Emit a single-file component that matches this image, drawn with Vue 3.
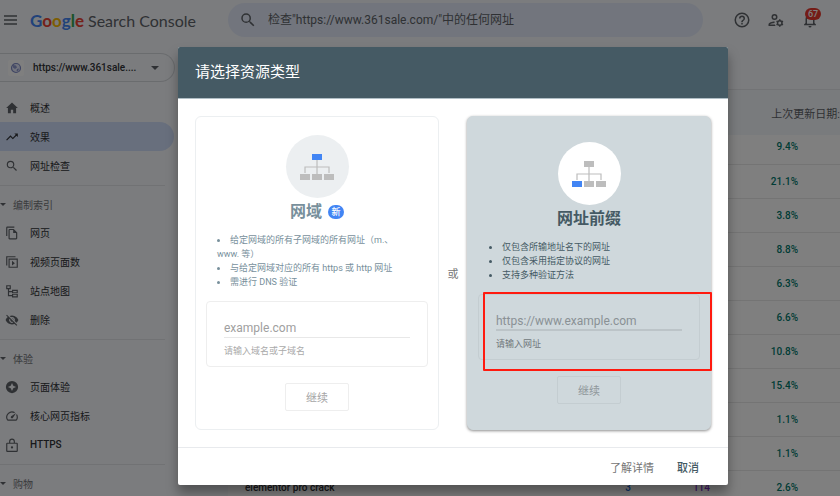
<template>
  <div class="page">
    <header class="topbar">
      <button class="icon-btn menu-btn" type="button" aria-label="菜单">
        <svg width="14" height="10" viewBox="0 0 14 10">
          <path d="M1 1h13M1 5h13M1 9h13" stroke="#5f6368" stroke-width="1.5" />
        </svg>
      </button>
      <a class="logo" href="#">
        <span class="google"
          ><span
            v-for="(letter, i) in logoLetters"
            :key="i"
            :class="letter.color"
            >{{ letter.char }}</span
          ></span
        >
        <span class="product">Search Console</span>
      </a>
      <label class="search">
        <svg width="18" height="18" viewBox="0 0 24 24">
          <path :d="icons.search" />
        </svg>
        <input
          type="text"
          aria-label="网址检查"
          placeholder='检查"https://www.361sale.com/"中的任何网址'
        />
      </label>
      <div class="actions">
        <button class="icon-btn" type="button" aria-label="帮助">
          <svg width="18" height="18" viewBox="0 0 24 24">
            <path :d="icons.help" />
          </svg>
        </button>
        <button class="icon-btn" type="button" aria-label="用户设置">
          <svg width="18" height="18" viewBox="0 0 24 24">
            <path
              d="M10 12a4 4 0 1 0 0-8 4 4 0 0 0 0 8zm0-6a2 2 0 1 1 0 4 2 2 0 0 1 0-4zM4 18c.2-.7 3.3-2 6-2l.2-2C7 13.900 2 15.300 2 18v2h9.500a7 7 0 0 1-1-2H4z"
            />
            <circle cx="17" cy="16" r="3" fill="none" stroke="#5f6368" stroke-width="2" />
            <path
              d="M17 11v2M17 19v2M12.700 13.500l1.700 1M19.600 17.500l1.700 1M12.700 18.500l1.700-1M19.600 14.500l1.700-1"
              stroke="#5f6368"
              stroke-width="2"
            />
          </svg>
        </button>
        <button class="icon-btn bell" type="button" aria-label="通知">
          <svg width="18" height="18" viewBox="0 0 24 24">
            <path :d="icons.bell" />
          </svg>
          <span class="count">67</span>
        </button>
      </div>
    </header>

    <div class="layout">
      <nav class="sidebar">
        <button class="property" type="button">
          <span class="favicon">
            <svg width="12" height="12" viewBox="0 0 12 12">
              <circle cx="6" cy="6" r="4.500" fill="#e4e8fa" stroke="#7f8ac6" stroke-width="1.200" />
              <path d="M3 3l3 .5 1 2-2 1.500-2-1.500zM7 7l2-.5-1 3-1.500-.5z" fill="#8f99cf" />
            </svg>
          </span>
          <span class="property-name">https://www.361sale....</span>
          <span class="caret"></span>
        </button>

        <template v-for="(group, i) in groups" :key="i">
          <div v-if="group.title" class="group-title">
            <span class="caret small"></span>{{ group.title }}
          </div>
          <a
            v-for="item in group.items"
            :key="item.label"
            href="#"
            class="nav-item"
            :class="{ active: item.active, latin: item.latin }"
          >
            <svg width="14" height="14" viewBox="0 0 24 24">
              <path :d="icons[item.icon]" fill-rule="evenodd" />
            </svg>
            {{ item.label }}
          </a>
        </template>
      </nav>

      <main class="content">
        <div class="updated">上次更新日期:</div>
        <table>
          <tbody>
            <tr v-for="(row, i) in rows" :key="i">
              <td class="query">{{ row.query }}</td>
              <td class="clicks">{{ row.clicks }}</td>
              <td class="views">{{ row.views }}</td>
              <td class="ctr">{{ row.ctr }}</td>
              <td class="rest"></td>
            </tr>
          </tbody>
        </table>
      </main>
    </div>

    <div class="overlay">
      <div class="dialog" role="dialog" aria-labelledby="dialog-title">
        <h1 id="dialog-title">请选择资源类型</h1>
        <div class="dialog-body">
          <template v-for="(card, i) in cards" :key="card.id">
            <span v-if="i" class="or">或</span>
            <section class="card" :class="card.id">
              <div class="circle">
                <svg width="36" height="28" viewBox="0 0 36 28">
                  <path
                    d="M18 7v14M6 20v-6h24v6"
                    fill="none"
                    stroke="#bdbdbd"
                    stroke-width="1.200"
                  />
                  <rect
                    v-for="(box, n) in boxes"
                    :key="n"
                    :x="box.x"
                    :y="box.y"
                    width="10"
                    height="6"
                    :fill="n === card.accent ? '#4285f4' : '#bdbdbd'"
                  />
                </svg>
              </div>
              <h2>
                {{ card.title }}<span v-if="card.badge" class="badge">{{ card.badge }}</span>
              </h2>
              <ul>
                <li v-for="point in card.points" :key="point">{{ point }}</li>
              </ul>
              <div class="field">
                <input :id="card.id" type="text" :placeholder="card.placeholder" />
                <label :for="card.id">{{ card.hint }}</label>
                <span v-if="card.highlight" class="highlight"></span>
              </div>
              <button class="continue" type="button">继续</button>
            </section>
          </template>
        </div>
        <footer>
          <a href="#">了解详情</a>
          <button type="button">取消</button>
        </footer>
      </div>
    </div>
  </div>
</template>

<script setup>
const logoLetters = [
  { char: 'G', color: 'blue' },
  { char: 'o', color: 'red' },
  { char: 'o', color: 'yellow' },
  { char: 'g', color: 'blue' },
  { char: 'l', color: 'green' },
  { char: 'e', color: 'red' },
];

const icons = {
  search:
    'M15.500 14h-.79l-.28-.27A6.470 6.470 0 0 0 16 9.500 6.500 6.500 0 1 0 9.500 16c1.610 0 3.090-.59 4.230-1.570l.27.28v.79l5 4.990L20.490 19l-4.990-5zm-6 0a4.500 4.500 0 1 1 0-9 4.500 4.500 0 0 1 0 9z',
  help: 'M11 18h2v-2h-2v2zm1-16a10 10 0 1 0 0 20 10 10 0 0 0 0-20zm0 18a8 8 0 1 1 0-16 8 8 0 0 1 0 16zm0-14a4 4 0 0 0-4 4h2a2 2 0 1 1 4 0c0 2-3 1.750-3 5h2c0-2.250 3-2.500 3-5a4 4 0 0 0-4-4z',
  bell: 'M12 22a2 2 0 0 0 2-2h-4a2 2 0 0 0 2 2zm6-6v-5c0-3.070-1.630-5.640-4.500-6.320V4a1.500 1.500 0 0 0-3 0v.68C7.640 5.360 6 7.920 6 11v5l-2 2v1h16v-1l-2-2zm-2 1H8v-6c0-2.480 1.510-4.500 4-4.500s4 2.020 4 4.500v6z',
  home: 'M12 2.500L2 12h3v9h5v-6h4v6h5v-9h3z',
  trend: 'M16 6l2.290 2.290-4.880 4.880-4-4L2 16.590 3.410 18l6-6 4 4 6.300-6.290L22 12V6z',
  pages:
    'M16 1H4a2 2 0 0 0-2 2v14h2V3h12V1zm-1 4H8a2 2 0 0 0-2 2v14c0 1.100.9 2 2 2h11a2 2 0 0 0 2-2V11l-6-6zM8 21V7h6v5h5v9H8z',
  video:
    'M2 2h16v2H4v14H2V2zm4 4h16v16H6V6zm2 2v12h12V8H8zm4 2l5 4-5 4v-8z',
  sitemap:
    'M2 2h8v7H7v3h5v-2h10v5.500H12V14H7v5h5v-2.500h10V23H12v-2H5V9H2V2zm2 2v3h4V4H4zm10 8v2h6v-2h-6zm0 6.500V21h6v-2.500h-6z',
  hidden:
    'M12 7a5 5 0 0 1 4.640 6.830l2.920 2.920A11.800 11.800 0 0 0 23 12a11.800 11.800 0 0 0-15-7.070l2.160 2.160C10.740 7.130 11.350 7 12 7zM2 4.270l2.740 2.740A11.800 11.800 0 0 0 1 12c1.730 4.390 6 7.500 11 7.500 1.550 0 3.030-.3 4.380-.84L19.730 22 21 20.730 3.270 3 2 4.270zM7.530 9.800l1.550 1.550a3 3 0 0 0 3.570 3.570l1.550 1.550A5 5 0 0 1 7.530 9.800zm4.310-.78l3.150 3.150.02-.16a3 3 0 0 0-3-3l-.17.01z',
  experience:
    'M12 1.500a10.500 10.500 0 1 0 0 21 10.500 10.500 0 0 0 0-21zM12 5l2.200 4.800L19 12l-4.800 2.200L12 19l-2.200-4.800L5 12l4.800-2.200z',
  speed:
    'M20.380 8.570l-1.230 1.850a8 8 0 0 1-.22 7.580H5.070A8 8 0 0 1 15.580 6.850l1.850-1.230A10 10 0 0 0 3.350 19a2 2 0 0 0 1.720 1h13.850a2 2 0 0 0 1.740-1 10 10 0 0 0-.27-10.440zM10.590 15.410a2 2 0 0 0 2.830 0l5.660-8.490-8.490 5.660a2 2 0 0 0 0 2.830z',
  lock: 'M18 8h-1V6A5 5 0 0 0 7 6v2H4a2 2 0 0 0-2 2v12a2 2 0 0 0 2 2h16a2 2 0 0 0 2-2V10a2 2 0 0 0-2-2h-2zM9 6a3 3 0 1 1 6 0v2H9V6zm11 16H4V10h16v12zm-8-4a2 2 0 1 0 0-4 2 2 0 0 0 0 4z',
};

const groups = [
  {
    items: [
      { label: '概述', icon: 'home' },
      { label: '效果', icon: 'trend', active: true },
      { label: '网址检查', icon: 'search' },
    ],
  },
  {
    title: '编制索引',
    items: [
      { label: '网页', icon: 'pages' },
      { label: '视频页面数', icon: 'video' },
      { label: '站点地图', icon: 'sitemap' },
      { label: '删除', icon: 'hidden' },
    ],
  },
  {
    title: '体验',
    items: [
      { label: '页面体验', icon: 'experience' },
      { label: '核心网页指标', icon: 'speed' },
      { label: 'HTTPS', icon: 'lock', latin: true },
    ],
  },
  { title: '购物', items: [] },
];

const rows = [
  { ctr: '9.4%' },
  { ctr: '21.1%' },
  { ctr: '3.8%' },
  { ctr: '8.8%' },
  { ctr: '6.3%' },
  { ctr: '6.6%' },
  { ctr: '10.8%' },
  { ctr: '15.4%' },
  { ctr: '1.1%' },
  { ctr: '1.1%' },
  { query: 'elementor pro crack', clicks: '3', views: '114', ctr: '2.6%' },
];

// Прямоугольники схемы: корень и три дочерних узла
const boxes = [
  { x: 13, y: 1 },
  { x: 1, y: 21 },
  { x: 13, y: 21 },
  { x: 25, y: 21 },
];

const cards = [
  {
    id: 'domain',
    title: '网域',
    badge: '新',
    accent: 0,
    points: [
      '给定网域的所有子网域的所有网址（m.、www. 等）',
      '与给定网域对应的所有 https 或 http 网址',
      '需进行 DNS 验证',
    ],
    placeholder: 'example.com',
    hint: '请输入域名或子域名',
  },
  {
    id: 'prefix',
    title: '网址前缀',
    accent: 1,
    points: ['仅包含所输地址名下的网址', '仅包含采用指定协议的网址', '支持多种验证方法'],
    placeholder: 'https://www.example.com',
    hint: '请输入网址',
    highlight: true,
  },
];
</script>

<style>
body {
  margin: 0;
}
</style>

<style scoped>
.page {
  height: 100vh;
  overflow: hidden;
  position: relative;
  background: #f6f8fc;
  color: #303236;
  font-family: Roboto, 'Noto Sans CJK SC', sans-serif;
  font-size: 10px;
}

.page * {
  box-sizing: border-box;
}

button,
input {
  font-family: inherit;
}

button {
  padding: 0;
  border: none;
  background: none;
}

a {
  color: inherit;
  text-decoration: none;
}

svg {
  display: block;
  flex-shrink: 0;
  fill: #5f6368;
}

/* Шапка */
.topbar {
  display: flex;
  align-items: center;
  height: 40px;
  padding: 0 21px 0 3px;
}

.menu-btn {
  width: 27px;
}

.logo {
  display: flex;
  align-items: baseline;
  gap: 4px;
  width: 198px;
  font-family: Lato, sans-serif;
  white-space: nowrap;
}

.google {
  font-size: 17px;
  font-weight: 700;
}

.product {
  font-size: 16px;
  color: #5f6368;
}

.blue {
  color: #4285f4;
}

.red {
  color: #ea4335;
}

.yellow {
  color: #fbbc05;
}

.green {
  color: #34a853;
}

.search {
  display: flex;
  align-items: center;
  gap: 11px;
  flex: 1;
  height: 34px;
  padding: 0 11px;
  border-radius: 17px;
  background: #e4ebfa;
}

.search input {
  flex: 1;
  min-width: 0;
  padding: 0;
  border: none;
  background: none;
  font-size: 12px;
}

.search input::placeholder {
  color: #5f6368;
  opacity: 1;
}

.actions {
  display: flex;
  gap: 16px;
  margin-left: 30px;
}

.bell {
  position: relative;
}

.count {
  position: absolute;
  top: -3px;
  left: 4px;
  min-width: 16px;
  border-radius: 6px;
  background: #e8392e;
  color: #fff;
  font-size: 9px;
  font-weight: 500;
  line-height: 12px;
}

.layout {
  display: flex;
}

/* Боковое меню */
.sidebar {
  width: 174px;
  padding-top: 13px;
  flex-shrink: 0;
}

.property {
  display: flex;
  align-items: center;
  width: 175px;
  height: 29px;
  margin-bottom: 11px;
  padding-left: 8px;
  border: 1px solid #d5d8dd;
  border-left: none;
  border-radius: 0 15px 15px 0;
  color: #303236;
  font-size: 10px;
  font-weight: 500;
}

.favicon {
  display: flex;
  align-items: center;
  justify-content: center;
  width: 16px;
  height: 16px;
  margin-right: 9px;
  border-radius: 2px;
  background: #fff;
}

.property-name {
  width: 118px;
  text-align: left;
}

.caret {
  border: 4px solid transparent;
  border-top-color: #5f6368;
  border-bottom: none;
}

.caret.small {
  margin-right: 7px;
  border-width: 3px;
  border-bottom: none;
}

.nav-item {
  display: flex;
  align-items: center;
  gap: 11px;
  height: 29px;
  padding-left: 5px;
  border-radius: 0 15px 15px 0;
}

.nav-item.active {
  background: #d0defa;
}

.nav-item.active svg {
  fill: #303236;
}

.nav-item.latin {
  font-weight: 500;
}

.group-title {
  display: flex;
  align-items: center;
  height: 33px;
  margin: 5px 9px 0 0;
  padding-top: 5px;
  border-top: 1px solid #e2e4e8;
  color: #74777b;
}

/* Таблица */
.content {
  flex: 1;
  margin: 49px 0 0 54px;
  background: #fff;
}

.updated {
  display: flex;
  align-items: center;
  justify-content: flex-end;
  height: 46px;
  border-top: 1px solid #e4e6ea;
  background: #f3f6fb;
  color: #5f6368;
  font-size: 11px;
  white-space: nowrap;
}

table {
  width: 100%;
  border-collapse: collapse;
}

td {
  height: 34px;
  padding: 0;
  border-bottom: 1px solid #e8e8e8;
  text-align: right;
  font-weight: 500;
}

tr:first-child td {
  height: 29px;
  padding-bottom: 5px;
}

.query {
  padding-left: 17px;
  text-align: left;
}

.clicks {
  width: 80px;
  color: #1967d2;
}

.views {
  width: 79px;
  color: #8430ce;
}

.ctr {
  width: 88px;
  color: #00796b;
}

.rest {
  width: 42px;
}

/* Диалог */
.overlay {
  position: absolute;
  inset: 0;
  display: flex;
  align-items: flex-start;
  padding: 47px 112px 11px 178px;
  background: rgba(0, 0, 0, 0.5);
}

.dialog {
  flex: 1;
  border-radius: 2px;
  background: #fff;
  box-shadow: 0 8px 12px rgba(0, 0, 0, 0.35);
}

h1 {
  margin: 0;
  padding: 0 17px;
  border-bottom: 1px solid #b0bec5;
  border-radius: 2px 2px 0 0;
  background: #455a64;
  color: #fff;
  font-size: 15px;
  font-weight: 400;
  line-height: 51px;
}

.dialog-body {
  display: flex;
  padding: 17px;
}

.or {
  align-self: center;
  width: 28px;
  text-align: center;
  color: #757575;
  font-size: 11px;
}

.card {
  display: flex;
  flex: 1;
  flex-direction: column;
  align-items: center;
  justify-content: center;
  padding: 18px 10px;
  border: 1px solid #eceff1;
  border-radius: 6px;
  color: #78909c;
}

.prefix {
  border-color: #cfd8dc;
  background: #cfd8dc;
  color: #455a64;
  box-shadow: 0 1px 3px rgba(0, 0, 0, 0.45);
}

.circle {
  display: flex;
  align-items: center;
  justify-content: center;
  width: 63px;
  height: 63px;
  border-radius: 50%;
  background: #eceff1;
}

.prefix .circle {
  background: #fff;
}

h2 {
  display: flex;
  align-items: center;
  gap: 6px;
  margin: 0 0 7px;
  font-size: 16px;
  line-height: 28px;
}

.badge {
  width: 16px;
  border-radius: 8px;
  background: #4285f4;
  color: #fff;
  font-size: 9px;
  font-weight: 500;
  line-height: 14px;
  text-align: center;
}

ul {
  align-self: stretch;
  margin: 0 0 12px;
  padding: 0 27px 0 11px;
  list-style-position: inside;
  font-size: 9px;
  line-height: 14px;
}

.field {
  position: relative;
  align-self: stretch;
  display: flex;
  flex-direction: column;
  height: 66px;
  padding: 17px 17px 0;
  border: 1px solid #eeeeee;
  border-radius: 4px;
}

.field input {
  width: 100%;
  height: 19px;
  padding: 0;
  border: none;
  border-bottom: 1px solid #e8e8e8;
  background: none;
  font-size: 12px;
}

.field input::placeholder {
  color: #a0a0a0;
  opacity: 1;
}

.field label {
  margin-top: 6px;
  color: #aaaaaa;
  font-size: 9px;
  line-height: 14px;
}

.prefix .field,
.prefix .continue {
  border-color: #c4cdd1;
}

.prefix .field input {
  border-bottom: 2px solid #bcc4c8;
}

.prefix .field input::placeholder {
  color: #8a9195;
}

.prefix .field label {
  color: #6f777b;
}

.highlight {
  position: absolute;
  inset: -3px -13px -12px 4px;
  border: 2px solid #ff1a0f;
  border-radius: 1px;
  pointer-events: none;
}

.continue {
  width: 64px;
  height: 28px;
  margin-top: 16px;
  border: 1px solid #eeeeee;
  border-radius: 2px;
  color: #a6a6a6;
  font-size: 11px;
}

.prefix .continue {
  color: #8f979b;
}

footer {
  display: flex;
  align-items: center;
  justify-content: flex-end;
  gap: 23px;
  height: 38px;
  padding-right: 29px;
  border-top: 1px solid #e8eaed;
  color: #757575;
  font-size: 11px;
}

footer button {
  color: #455a64;
  font-size: 11px;
  font-weight: 500;
}
</style>
